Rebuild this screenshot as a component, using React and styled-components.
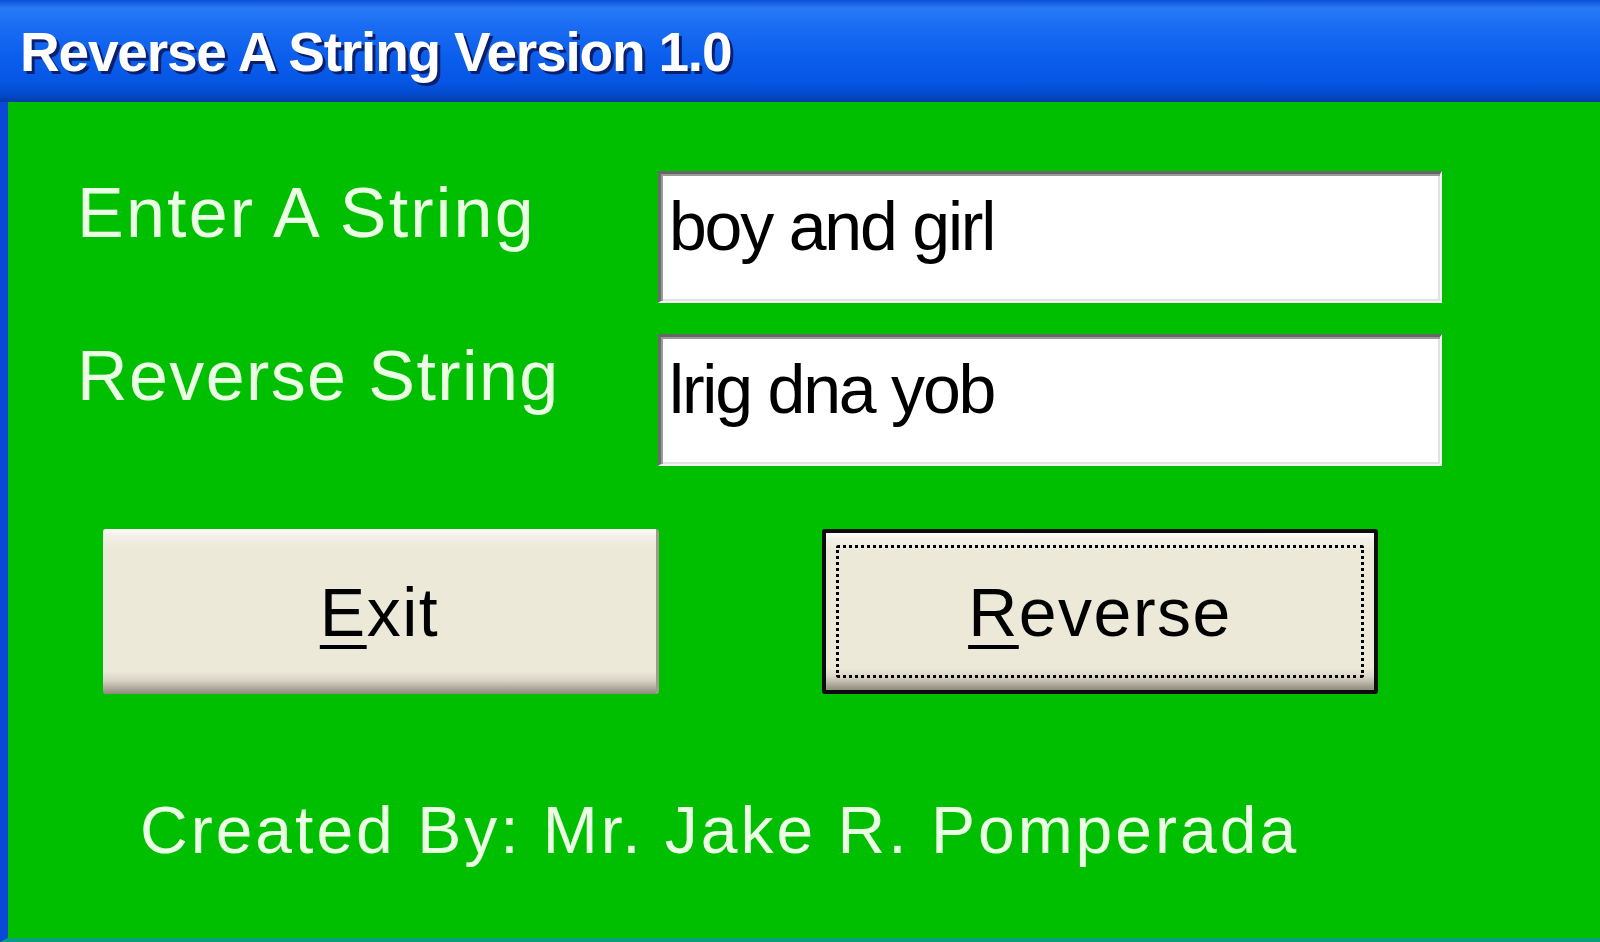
import React from 'react';
import styled, { createGlobalStyle } from 'styled-components';

const GlobalStyle = createGlobalStyle`
  html, body {
    margin: 0;
    padding: 0;
    overflow: hidden;
    background: #00bf00;
  }
`;

const Window = styled.div`
  display: flex;
  flex-direction: column;
  width: 1600px;
  height: 942px;
  font-family: "Liberation Sans", Arial, sans-serif;
`;

const TitleBar = styled.div`
  height: 102px;
  box-sizing: border-box;
  padding: 25px 0 0 20px;
  background: linear-gradient(
    to bottom,
    #0a4fd6 0%,
    #2a7af6 8%,
    #1a6cf2 25%,
    #0b5fec 55%,
    #0656e4 80%,
    #0349c8 94%,
    #023aa6 100%
  );
`;

const Title = styled.h1`
  margin: 0;
  font-size: 55px;
  line-height: 55px;
  font-weight: bold;
  letter-spacing: -1.2px;
  color: #ffffff;
  text-shadow: 3px 3px 0 #0a1f6e;
`;

const Body = styled.div`
  flex: 1;
  display: flex;
  flex-direction: column;
  align-items: flex-start;
  padding: 69px 0 0 69px;
  background: #00bf00;
  border-left: 8px solid #0a48d8;
  border-bottom: 4px solid #08a07a;
`;

const Fields = styled.div`
  display: grid;
  grid-template-columns: 581px 784px;
  grid-auto-rows: 132px;
  row-gap: 31px;
`;

const Label = styled.label`
  margin-top: 7px;
  font-size: 70px;
  line-height: 70px;
  letter-spacing: ${(p) => (p.$wide ? '2.2px' : '1.4px')};
  color: #eaffe4;
`;

const TextBox = styled.input`
  box-sizing: border-box;
  width: 784px;
  height: 132px;
  padding: 16px 8px 40px;
  margin: 0;
  font-family: "Liberation Sans", Arial, sans-serif;
  font-size: 68px;
  line-height: 68px;
  letter-spacing: -2.2px;
  color: #000;
  background: #fff;
  border-style: solid;
  border-width: 3px 2px 2px 3px;
  border-color: #666666 #f4f4f4 #f4f4f4 #6a6a6a;
  box-shadow: inset 2px 2px 0 #9a9a9a, inset -2px -2px 0 #e2e2e2;
  outline: none;
`;

const ButtonRow = styled.div`
  display: flex;
  gap: 163px;
  margin: 63px 0 0 26px;
`;

const Button = styled.button`
  position: relative;
  box-sizing: border-box;
  width: 556px;
  height: 165px;
  padding: 0;
  font-family: "Liberation Sans", Arial, sans-serif;
  font-size: 68px;
  letter-spacing: 1.5px;
  color: #000;
  cursor: pointer;
  border-radius: 3px;
  border: ${(p) => (p.$default ? '4px solid #0c0c0c' : 'none')};
  border-right: ${(p) => (p.$default ? '4px solid #0c0c0c' : '3px solid #9f9b8e')};
  background: linear-gradient(
    to bottom,
    #ffffff 0%,
    #f4f2ea 3%,
    #ece9d8 12%,
    #ece9d8 86%,
    #d8d2c6 92%,
    #aaa596 97%,
    #8f8b7e 100%
  );

  u {
    text-underline-offset: 9px;
    text-decoration-thickness: 4px;
  }

  &::after {
    content: '';
    display: ${(p) => (p.$default ? 'block' : 'none')};
    position: absolute;
    inset: 12px 10px 12px 10px;
    border: 3px dotted #000;
    border-radius: 3px;
  }
`;

const Credit = styled.p`
  margin: 103px 0 0 63px;
  font-size: 66px;
  line-height: 66px;
  letter-spacing: 3px;
  color: #eaffe4;
`;

const App = () => (
  <>
    <GlobalStyle />
    <Window>
      <TitleBar>
        <Title>Reverse A String Version 1.0</Title>
      </TitleBar>
      <Body>
        <Fields>
          <Label htmlFor="source" $wide>Enter A String</Label>
          <TextBox id="source" defaultValue="boy and girl" />
          <Label htmlFor="reversed">Reverse String</Label>
          <TextBox id="reversed" defaultValue="lrig dna yob" readOnly />
        </Fields>
        <ButtonRow>
          <Button>
            <u>E</u>xit
          </Button>
          <Button $default>
            <u>R</u>everse
          </Button>
        </ButtonRow>
        <Credit>Created By: Mr. Jake R. Pomperada</Credit>
      </Body>
    </Window>
  </>
);

export default App;
